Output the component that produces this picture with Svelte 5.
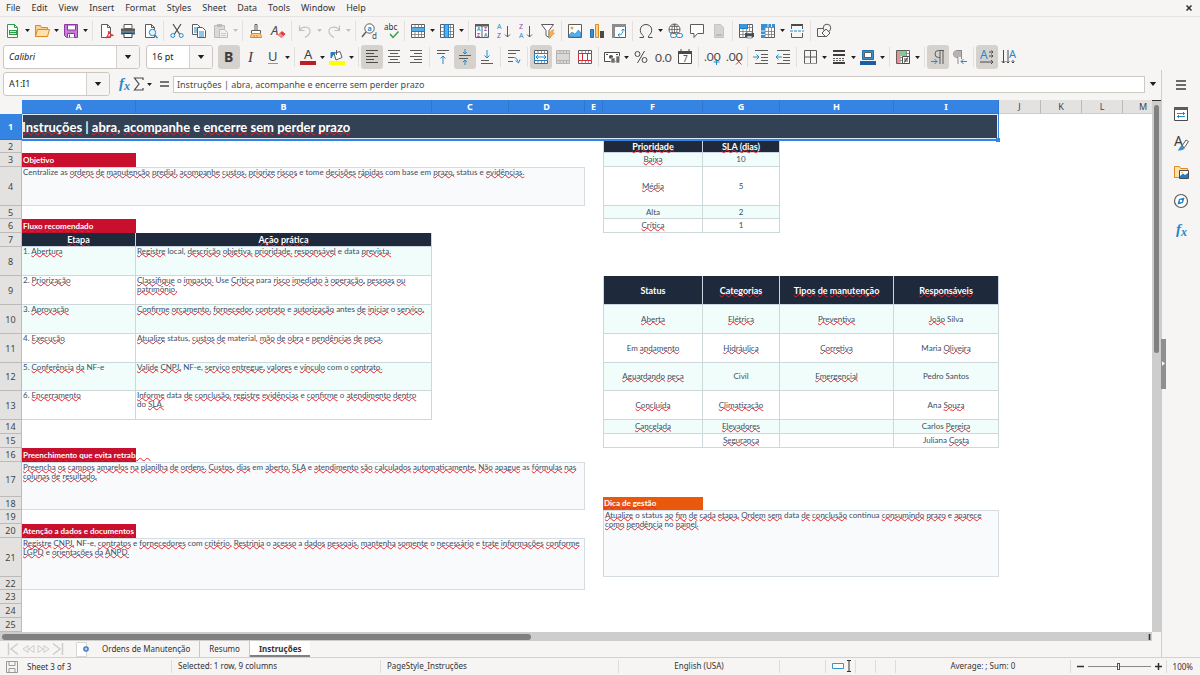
<script lang="ts">
  type Cell = { t: string; k: string; cols?: number; rows?: number };
  type Tool = { icon: string; label: string; split?: boolean; on?: boolean; off?: boolean };

  const menus = ['File', 'Edit', 'View', 'Insert', 'Format', 'Styles', 'Sheet', 'Data', 'Tools', 'Window', 'Help'];

  const page = '<path d="M3.5 1.5h6l3 3v10h-9z" fill="#fff" stroke="#5c5c5c"/><path d="M9.5 1.5v3h3" fill="none" stroke="#5c5c5c"/>';
  const table = '<path d="M1.5 1.5h13v13h-13z" fill="#fff" stroke="#5c5c5c"/><path d="M1.5 4.5h13M1.5 8.5h13M1.5 11.5h13M5 1.5v13M8.5 1.5v13M11.5 1.5v13" fill="none" stroke="#7a7a7a" stroke-width=".8"/>';

  const icons: Record<string, string> = {
    new: '<path d="M2.5 1.5h7l3 3v10h-10z" fill="#fff" stroke="#2e9e46"/><path d="M9.5 1.5v3h3" fill="none" stroke="#2e9e46"/><path d="M4 7h8v5H4z" fill="#2e9e46"/><path d="M5 8.5h6M5 10.5h6" stroke="#fff" stroke-width=".8"/>',
    open: '<path d="M1.5 13.5v-11h5l1 2h6v3" fill="#fbd08a" stroke="#e08a1e"/><path d="M1.5 13.5l2-7h12l-2 7z" fill="#fde1ae" stroke="#e08a1e"/>',
    save: '<path d="M1.5 1.5h13v13h-11l-2-2z" fill="#c77dd6" stroke="#8b3a9e"/><path d="M4.5 2v5h8V2z" fill="#fff" stroke="#8b3a9e"/><path d="M4.5 14.5v-4h7v4" fill="#fff" stroke="#8b3a9e"/><path d="M6.5 11.5v3" stroke="#8b3a9e"/>',
    pdf: page + '<path d="M8 15c2-2 3-5 2.5-7c2 4 3 4 5 4.5c-3 0-5 1-7.5 2.5" fill="none" stroke="#e5343d" stroke-width="1.2"/>',
    print: '<path d="M4 1.5h8v4H4z" fill="#fff" stroke="#5c5c5c"/><path d="M1 5.5h14v6H1z" fill="#5c5c5c"/><path d="M1 8h14v1.5H1z" fill="#3a8fd0"/><path d="M4 10.5h8v4H4z" fill="#fff" stroke="#3d3d3d"/>',
    preview: page + '<circle cx="10.5" cy="9.5" r="3.2" fill="#e5f3fd" stroke="#1e8bcd"/><path d="M12.8 12l2.7 3" stroke="#1e8bcd" stroke-width="1.4"/>',
    cut: '<path d="M4 1l6.5 10M12 1L5.5 11" stroke="#4a4a4a" stroke-width="1.2"/><circle cx="3.8" cy="12.5" r="2" fill="none" stroke="#1e8bcd"/><circle cx="12.2" cy="12.5" r="2" fill="none" stroke="#1e8bcd"/>',
    copy: '<path d="M1.5 1.5h5l3 3v7h-8z" fill="#fff" stroke="#5c5c5c"/><path d="M3 5h4M3 7h3M3 9h3" stroke="#1e8bcd"/><path d="M6.5 4.5h5l3 3v7h-8z" fill="#fff" stroke="#5c5c5c"/><path d="M8 9h5M8 11h5M8 13h5" stroke="#1e8bcd"/>',
    paste: '<path d="M1.5 2.5h10v12h-10z" fill="#dcdad8" stroke="#bdbbb9"/><path d="M4 1h5v3H4z" fill="#bdbbb9"/><path d="M6.5 6.5h5l3 3v5h-8z" fill="#f3f2f1" stroke="#bdbbb9"/><path d="M8 10.5h5M8 12.5h5" stroke="#c8c6c4"/>',
    clone: '<path d="M7 1.5h2v6H7z" fill="#fff" stroke="#5c5c5c"/><path d="M3.5 7.5h9v3h-9z" fill="#fff" stroke="#5c5c5c"/><path d="M3.5 10.5h9l1 4h-11z" fill="#fbc98a" stroke="#e08a1e"/><path d="M6 12v2M9 12v2" stroke="#e08a1e"/>',
    clear: '<text x="1" y="12" font-size="13" font-style="italic" fill="#4a4a4a">A</text><path d="M8 12l4-4 3.5 3-4 4z" fill="#e5343d"/><path d="M8 12l2-2 3.5 3-2 2z" fill="#f58a90"/>',
    undo: '<path d="M2.5 2.5v5h5M2.5 7.5c3-5 11-4 10.5 1c0 3-2.5 4.5-5 6" fill="none" stroke="#c2c0be" stroke-width="1.2"/>',
    redo: '<path d="M13.5 2.5v5h-5M13.5 7.5c-3-5-11-4-10.5 1c0 3 2.5 4.5 5 6" fill="none" stroke="#c2c0be" stroke-width="1.2"/>',
    find: '<circle cx="8.5" cy="5.5" r="4.7" fill="#fff" stroke="#5c5c5c"/><path d="M5 9l-4 5" stroke="#5c5c5c" stroke-width="1.4"/><text x="6.5" y="8" font-size="7" font-weight="bold" fill="#1e8bcd">a</text><text x="11" y="15.5" font-size="8" fill="#4a4a4a">d</text>',
    spell: '<text x="1" y="7" font-size="8" fill="#333">abc</text><path d="M7 11l3 3.5 5.5-6" fill="none" stroke="#2e9e46" stroke-width="1.4"/>',
    row: table + '<path d="M1.5 4.5h13v4h-13z" fill="#58aee6" stroke="#1e7fc8"/>',
    column: table + '<path d="M5.5 1.5h4v13h-4z" fill="#58aee6" stroke="#1e7fc8"/>',
    sort: '<path d="M1.5 1.5h13v13h-13z" fill="#fff" stroke="#5c5c5c"/><path d="M1 1h14v2.5H1z" fill="#5c5c5c"/><path d="M8 3v11" stroke="#5c5c5c"/><g font-size="5" font-weight="bold"><text x="3" y="8" fill="#1e8bcd">A</text><text x="3" y="14" fill="#9b3fb5">Z</text><text x="10" y="8" fill="#9b3fb5">Z</text><text x="10" y="14" fill="#1e8bcd">A</text></g>',
    asc: '<text x="1" y="6" font-size="7" fill="#1e8bcd">A</text><text x="1" y="15" font-size="7" fill="#9b3fb5">Z</text><path d="M11.5 3v11M9 11.5l2.5 2.5 2.5-2.5" fill="none" stroke="#5c5c5c"/>',
    desc: '<text x="1" y="6" font-size="7" fill="#9b3fb5">Z</text><text x="1" y="15" font-size="7" fill="#1e8bcd">A</text><path d="M11.5 3v11M9 11.5l2.5 2.5 2.5-2.5" fill="none" stroke="#5c5c5c"/>',
    filter: '<path d="M1.5 1.5h12l-4.5 6v7l-3-2v-5z" fill="#fff" stroke="#5c5c5c"/><path d="M12 7l-3.5 4.5h2.5l-1.5 4 5-5.5h-2.5l2-3z" fill="#fbb35a" stroke="#e08a1e" stroke-width=".6"/>',
    image: '<path d="M1.5 1.5h13v13h-13z" fill="#fff" stroke="#5c5c5c"/><circle cx="5" cy="5" r="1.5" fill="#f5a33b"/><path d="M2 12l3-3 3 2 3.5-4L14 10v4H2z" fill="#58aee6" stroke="#1e7fc8" stroke-width=".6"/>',
    chart: '<path d="M1.5 6.5h3v8h-3z" fill="#3a8fd0" stroke="#1e6fb0"/><path d="M6.5 1.5h3v13h-3z" fill="#fbd08a" stroke="#e08a1e"/><path d="M11 8h4v7h-4z" fill="#4a4a4a"/>',
    pivot: '<path d="M1.5 1.5h13v13h-13z" fill="#fff" stroke="#5c5c5c"/><path d="M1 1h14v3H4v11H1z" fill="#8d8d8d"/><path d="M7 12c4 0 5-2 5-6M10.5 7.5L12 6l1.5 1.5M8.5 10.5L7 12l1.5 1.5" fill="none" stroke="#1e8bcd"/>',
    omega: '<path d="M1.5 14.5h4v-1.5C0 9 2 1.5 8 1.5s8 7.5 2.5 11.5v1.5h4" fill="none" stroke="#4a4a4a"/>',
    link: '<circle cx="7.5" cy="6.5" r="5.5" fill="#fff" stroke="#5c5c5c"/><path d="M2 6.5h11M7.5 1v11M3.5 3.5h8M3.5 9.5h8M7.5 1c-3.5 3-3.5 8 0 11M7.5 1c3.5 3 3.5 8 0 11" fill="none" stroke="#5c5c5c" stroke-width=".8"/><rect x="3.5" y="10.5" width="6" height="4" rx="2" fill="#f6f5f4" stroke="#1e8bcd"/><rect x="9.5" y="10.5" width="6" height="4" rx="2" fill="#f6f5f4" stroke="#1e8bcd"/>',
    comment: '<path d="M1.5 1.5h13v9h-6l-3.5 4v-4h-3.5z" fill="#fff" stroke="#5c5c5c"/>',
    footer: '<path d="M3.5 1.5h6l3 3v10h-9z" fill="#d6d4d2" stroke="#c6c4c2"/><path d="M5 11h6v2H5z" fill="#bbb"/>',
    headers: table + '<path d="M1 1h9v5H1z" fill="#1e7fc8"/><path d="M2 2h7M2 4h7" stroke="#58aee6"/><path d="M7 10h9v4H7z" fill="#4a4a4a"/><path d="M9 8.5h5v2H9zM9 13h5v2H9z" fill="#fff" stroke="#4a6a8a" stroke-width=".7"/>',
    freeze: table + '<path d="M1 1h4v14H1z" fill="#3a8fd0"/><path d="M1 1h14v3H1z" fill="#3a8fd0"/><path d="M1 8h4M1 11.5h4M8 1v3M11.5 1v3" stroke="#fff" stroke-width=".8"/>',
    split: '<path d="M2 1h12v2H2z" fill="#4a4a4a"/><path d="M2.5 2v4M13.5 2v4M2.5 10v4.5h11V10" fill="none" stroke="#5c5c5c"/><path d="M1 8h14" stroke="#1e8bcd" stroke-dasharray="3 1"/>',
    draw: '<path d="M1.5 5.5h8v8h-8z" fill="#f6f5f4" stroke="#5c5c5c"/><circle cx="11" cy="5" r="3.8" fill="#f6f5f4" stroke="#5c5c5c"/><path d="M10 6l4 4-4 4-4-4z" fill="#f6f5f4" stroke="#5c5c5c"/>',
    bold: '<text x="3" y="13" font-size="14" font-weight="bold" fill="#3d3d3d">B</text>',
    italic: '<text x="5" y="13" font-size="15" font-style="italic" font-family="Liberation Serif, serif" fill="#3d3d3d">I</text>',
    underline: '<text x="3" y="12" font-size="13" fill="#4a4a4a">U</text><path d="M3 14.5h10" stroke="#58a6e0"/>',
    color: '<text x="4" y="10" font-size="13" fill="#3d3d3d">A</text><path d="M0 12h16v4H0z" fill="#c01c28"/>',
    fill: '<path d="M5 4.5l6-2 2 6-6 2.5z" fill="#fff" stroke="#5c5c5c"/><path d="M7.5 1v5" stroke="#5c5c5c"/><path d="M2 9V3.5h4L4 6z" fill="#1e7fc8" stroke="#1e7fc8"/><path d="M0 12h16v4H0z" fill="#ffff00"/>',
    left: '<path d="M2 1.5h12M2 4.5h8M2 7.5h12M2 10.5h8M2 13.5h12" stroke="#4a4a4a"/>',
    center: '<path d="M2 1.5h12M4 4.5h8M2 7.5h12M4 10.5h8M2 13.5h12" stroke="#5c5c5c"/>',
    right: '<path d="M2 1.5h12M6 4.5h8M2 7.5h12M6 10.5h8M2 13.5h12" stroke="#5c5c5c"/>',
    top: '<path d="M2 1.5h12M2 4.5h8" stroke="#5c5c5c"/><path d="M8 15V7M5.5 9.5L8 7l2.5 2.5" fill="none" stroke="#1e8bcd"/>',
    middle: '<path d="M2 6.5h12M2 9.5h9" stroke="#5c5c5c"/><path d="M8 0v5M6 3l2 2 2-2M8 16v-5M6 13l2-2 2 2" fill="none" stroke="#1e8bcd"/>',
    bottom: '<path d="M2 11.5h8M2 14.5h12" stroke="#5c5c5c"/><path d="M8 1v8M5.5 6.5L8 9l2.5-2.5" fill="none" stroke="#1e8bcd"/>',
    wrap: '<path d="M2 1.5h12M2 4.5h8M2 8.5h5M2 12.5h5" stroke="#5c5c5c"/><path d="M7 8.5c4 0 4 2 5 4M9.5 11.5l3 2.5 1.5-3.5" fill="none" stroke="#1e8bcd"/>',
    merge: table + '<path d="M1.5 4.5h13v7h-13z" fill="#fff" stroke="#1e7fc8"/><path d="M3 8h10M5 6L3 8l2 2M11 6l2 2-2 2" fill="none" stroke="#1e8bcd"/>',
    center2: '<path d="M1.5 1.5h13v13h-13zM1.5 4.5h13M1.5 11.5h13M5 1.5v3M8.5 1.5v3M11.5 1.5v3M5 11.5v3M8.5 11.5v3M11.5 11.5v3" fill="#dad8d6" stroke="#b5b3b1"/>',
    unmerge: table + '<path d="M1.5 4.5h13v7h-13zM5.5 4.5v7M10.5 4.5v7" fill="#fff" stroke="#d32f3a"/>',
    currency: '<path d="M.5 3.5h15v9H.5z" fill="#fff" stroke="#4a4a4a"/><circle cx="7" cy="8" r="2" fill="#4a4a4a"/><path d="M2 5.5h2M12 5.5h2" stroke="#4a4a4a"/><path d="M7 9h4v5H7zM12 7h3.5v7H12z" fill="#6a6a6a" stroke="#f6f5f4" stroke-width=".6"/>',
    percent: '<circle cx="4.5" cy="5" r="2.5" fill="none" stroke="#4a4a4a"/><circle cx="11.5" cy="11" r="2.5" fill="none" stroke="#4a4a4a"/><path d="M11.5 2l-7 12" stroke="#4a4a4a"/>',
    number: '<text x="0" y="13" font-size="12" font-family="Lato, sans-serif" fill="#4a4a4a">0.0</text>',
    date: '<path d="M1.5 2.5h13v12h-13z" fill="#fff" stroke="#4a4a4a"/><path d="M1 2h14v3H1z" fill="#4a4a4a"/><path d="M4 0v3M12 0v3" stroke="#4a4a4a"/><text x="6" y="13" font-size="8" fill="#333">7</text>',
    adddec: '<text x="0" y="12" font-size="12" font-family="Lato, sans-serif" fill="#4a4a4a">.00</text><path d="M12.5 10v6M9.5 13h6" stroke="#1e8bcd"/>',
    deldec: '<text x="0" y="12" font-size="12" font-family="Lato, sans-serif" fill="#4a4a4a">.00</text><path d="M10 10l5.5 5.5M15.5 10L10 15.5" stroke="#e5343d"/>',
    indent: '<path d="M2 1.5h13M8 5.5h7M8 8.5h7M2 14.5h13M8 11.5h7" stroke="#5c5c5c"/><path d="M0 8h6M3.5 5.5L6 8l-2.5 2.5" fill="none" stroke="#1e8bcd"/>',
    outdent: '<path d="M2 1.5h13M8 5.5h7M8 8.5h7M2 14.5h13M8 11.5h7" stroke="#5c5c5c"/><path d="M7 8H1M3.5 5.5L1 8l2.5 2.5" fill="none" stroke="#1e8bcd"/>',
    borders: '<path d="M2.5 14.5v-13h12v13M8.5 2v12M2.5 8h12" fill="none" stroke="#5c5c5c"/><path d="M2 14.5h13" stroke="#e08a1e"/>',
    style: '<path d="M2 2h12M2 6h12M2 14h12" stroke="#3d3d3d" stroke-width="2"/><path d="M2 9.5h12M2 11.5h12" stroke="#5c5c5c" stroke-dasharray="2 1"/>',
    bcolor: '<path d="M2.5 1.5h11v9h-11z" fill="#3a8fd0" stroke="#1e6fb0"/><path d="M4.5 3.5h7v5h-7z" fill="#fff" stroke="#5c5c5c"/><path d="M0 12h16v4H0z" fill="#1c5f9e"/>',
    cond: table + '<path d="M2 2h3v12H2z" fill="#f58a90"/><path d="M5 2h6v5H5z" fill="#7fce91"/><path d="M7.5 7.5h7v7h-7z" fill="#fff" stroke="#4a4a4a"/><path d="M9 10h4M9 12h4M12.5 8.5l-3 5" stroke="#4a4a4a"/>',
    ltr: '<path d="M14 1.5H8.5a3.5 3.5 0 0 0 0 7H10M10 2v13M13 2v13" fill="none" stroke="#5c5c5c"/><path d="M1 12.5h6M4.5 10L7 12.5 4.5 15" fill="none" stroke="#1e8bcd"/>',
    rtl: '<path d="M10 1.5H5a3.5 3.5 0 0 0 0 7h1V15M9.5 2v8" fill="none" stroke="#8d8b89"/><path d="M6 2H5a3 3 0 0 0 0 6h4V2z" fill="#b5b3b1"/><path d="M15 12.5H9M11.5 10L9 12.5l2.5 2.5" fill="none" stroke="#1e8bcd"/>',
    horiz: '<text x="1" y="10" font-size="12" fill="#1e8bcd">A</text><path d="M10 3h4M10 7h4M1 13h13M12.5 1.5L14 3l-1.5 1.5M12.5 5.5L14 7l-1.5 1.5M12 11l2 2-2 2" fill="none" stroke="#4a4a4a"/>',
    vert: '<text x="8" y="9" font-size="11" fill="#1e8bcd">A</text><path d="M2.5 1v13M7 1v13M12 11v3M.5 12l2 2 2-2M5.5 12.5L7 14l1.5-1.5M10.5 12.5L12 14l1.5-1.5" fill="none" stroke="#4a4a4a"/>',
    fx: '<g font-family="Liberation Serif, serif" font-style="italic" font-weight="bold" fill="#2b86cc"><text x="3" y="12" font-size="15">f</text><text x="8" y="14" font-size="12">x</text></g>',
    sigma: '<path d="M12 4V2H3.5l4.5 6-4.5 6H12v-2" fill="none" stroke="#4a4a4a" stroke-width="1.2"/>',
    equals: '<path d="M4 6h9M4 10h9" stroke="#4a4a4a" stroke-width="1.6"/>',
    menu: '<path d="M3 4h10M3 8h10M3 12h10" stroke="#3d3d3d" stroke-width="1.5"/>',
    props: '<path d="M1.5 1.5h13v13h-13z" fill="#fff" stroke="#4a4a4a"/><path d="M1 1h14v3H1z" fill="#5c5c5c"/><path d="M4 7.5h8M4 10.5h8M10 6l1.5 1.5L10 9M6 9l-1.5 1.5L6 12" fill="none" stroke="#1e8bcd"/>',
    brush: '<text x="1" y="11" font-size="14" fill="#3d3d3d">A</text><path d="M9 11l4-6 2.5 1.5-4 6z" fill="#fff" stroke="#5c5c5c"/><path d="M9 10.5l3 2.5c-1 2-4 2.5-7.5 2.5 1.5-1 2-4 4.5-5z" fill="#3a8fd0"/>',
    gallery: '<path d="M1.5 13.5v-11h5l1 2h7v9z" fill="#fde1ae" stroke="#e08a1e"/><path d="M6.5 6.5h9v8h-9z" fill="#fff" stroke="#4a4a4a"/><path d="M7 12l3-2.5 2 1.5 3-2v5H7z" fill="#1e7fc8"/><circle cx="9" cy="8.5" r=".8" fill="#f5a33b"/>',
    compass: '<circle cx="8" cy="8" r="6.5" fill="#fff" stroke="#5c5c5c" stroke-width="1.2"/><path d="M11.5 4.5L10 10l-5.5 1.5L6 6z" fill="#1e7fc8"/><circle cx="8" cy="8" r="1.3" fill="#fff"/>',
    disk: '<path d="M2.5 2.5h11v11h-11zM5 2.5v4h6v-4M5 13.5v-4h6v4" fill="none" stroke="#9a9896"/>',
    addsheet: '<path d="M1.5 1.5h10v14h-10z" fill="#fff" stroke="#d8d6d4"/><circle cx="11" cy="8" r="2.8" fill="#3a76c4"/><path d="M11 6.5v3M9.5 8h3" stroke="#fff" stroke-width=".8"/>',
    first: '<path d="M3.5 2v12M13 2.5L6 8l7 5.5" fill="none" stroke="#cfcdcb" stroke-width="1.5"/>',
    prev: '<path d="M8 4.5L3 8l5 3.5zM14 4.5L9 8l5 3.5z" fill="none" stroke="#cfcdcb"/>',
    next: '<path d="M3 4.5L8 8l-5 3.5zM9 4.5L14 8l-5 3.5z" fill="none" stroke="#cfcdcb"/>',
    last: '<path d="M12.5 2v12M3 2.5L10 8l-7 5.5" fill="none" stroke="#cfcdcb" stroke-width="1.5"/>',
  };

  const standard: (Tool | null)[] = [
    { icon: 'new', label: 'New', split: true },
    { icon: 'open', label: 'Open', split: true },
    { icon: 'save', label: 'Save', split: true },
    null,
    { icon: 'pdf', label: 'Export as PDF' },
    { icon: 'print', label: 'Print' },
    { icon: 'preview', label: 'Print Preview' },
    null,
    { icon: 'cut', label: 'Cut' },
    { icon: 'copy', label: 'Copy' },
    { icon: 'paste', label: 'Paste', split: true, off: true },
    null,
    { icon: 'clone', label: 'Clone Formatting' },
    { icon: 'clear', label: 'Clear Formatting' },
    null,
    { icon: 'undo', label: 'Undo', split: true, off: true },
    { icon: 'redo', label: 'Redo', split: true, off: true },
    null,
    { icon: 'find', label: 'Find and Replace' },
    { icon: 'spell', label: 'Spelling' },
    null,
    { icon: 'row', label: 'Row', split: true },
    { icon: 'column', label: 'Column', split: true },
    null,
    { icon: 'sort', label: 'Sort' },
    { icon: 'asc', label: 'Sort Ascending' },
    { icon: 'desc', label: 'Sort Descending' },
    { icon: 'filter', label: 'AutoFilter' },
    null,
    { icon: 'image', label: 'Insert Image' },
    { icon: 'chart', label: 'Insert Chart' },
    { icon: 'pivot', label: 'Pivot Table' },
    null,
    { icon: 'omega', label: 'Special Character', split: true },
    { icon: 'link', label: 'Hyperlink' },
    { icon: 'comment', label: 'Comment' },
    { icon: 'footer', label: 'Headers and Footers', off: true },
    null,
    { icon: 'headers', label: 'Define Print Area' },
    { icon: 'freeze', label: 'Freeze Rows and Columns', split: true },
    { icon: 'split', label: 'Split Window' },
    null,
    { icon: 'draw', label: 'Show Draw Functions' },
  ];

  const formatting: (Tool | null)[] = [
    { icon: 'bold', label: 'Bold', on: true },
    { icon: 'italic', label: 'Italic' },
    { icon: 'underline', label: 'Underline', split: true },
    null,
    { icon: 'color', label: 'Font Color', split: true },
    { icon: 'fill', label: 'Background Color', split: true },
    null,
    { icon: 'left', label: 'Align Left', on: true },
    { icon: 'center', label: 'Center Horizontally' },
    { icon: 'right', label: 'Align Right' },
    null,
    { icon: 'top', label: 'Align Top' },
    { icon: 'middle', label: 'Center Vertically', on: true },
    { icon: 'bottom', label: 'Align Bottom' },
    null,
    { icon: 'wrap', label: 'Wrap Text' },
    null,
    { icon: 'merge', label: 'Merge and Center', on: true },
    { icon: 'center2', label: 'Merge Cells', off: true },
    { icon: 'unmerge', label: 'Unmerge Cells' },
    null,
    { icon: 'currency', label: 'Currency', split: true },
    { icon: 'percent', label: 'Percent' },
    { icon: 'number', label: 'Number' },
    { icon: 'date', label: 'Date' },
    null,
    { icon: 'adddec', label: 'Add Decimal Place' },
    { icon: 'deldec', label: 'Delete Decimal Place' },
    null,
    { icon: 'indent', label: 'Increase Indent' },
    { icon: 'outdent', label: 'Decrease Indent' },
    null,
    { icon: 'borders', label: 'Borders', split: true },
    { icon: 'style', label: 'Border Style', split: true },
    { icon: 'bcolor', label: 'Border Color', split: true },
    null,
    { icon: 'cond', label: 'Conditional', split: true },
    null,
    { icon: 'ltr', label: 'Left-To-Right', on: true },
    { icon: 'rtl', label: 'Right-To-Left' },
    null,
    { icon: 'horiz', label: 'Text direction left to right', on: true },
    { icon: 'vert', label: 'Text direction top to bottom' },
  ];

  const panels = [
    ['menu', 'Sidebar Settings'],
    ['props', 'Properties'],
    ['brush', 'Styles'],
    ['gallery', 'Gallery'],
    ['compass', 'Navigator'],
    ['fx', 'Functions'],
  ];

  const letters = 'ABCDEFGHIJKLM'.split('');
  const widths = [114, 296, 77, 76, 18, 100, 77, 114, 105, 42, 41, 41];
  const heights = [26, 13, 14, 39, 13, 14, 14, 29, 29, 29, 29, 28, 29, 14, 14, 14, 35, 13, 14, 14, 39, 13, 14, 14, 14];
  const selectedCols = 9;

  const title = 'Instruções | abra, acompanhe e encerre sem perder prazo';

  const cells: Record<string, Cell> = {
    A1: { t: title, k: 'title', cols: 9 },
    F2: { t: 'Prioridade', k: 'head edge' },
    G2: { t: 'SLA (dias)', k: 'head' },
    A3: { t: 'Objetivo', k: 'tag' },
    A4: {
      t: 'Centralize as ordens de manutenção predial, acompanhe custos, priorize riscos e tome decisões rápidas com base em prazo, status e evidências.',
      k: 'note',
      cols: 4,
    },
    A6: { t: 'Fluxo recomendado', k: 'tag' },
    A7: { t: 'Etapa', k: 'head' },
    B7: { t: 'Ação prática', k: 'head' },
    A16: { t: 'Preenchimento que evita retrabalho', k: 'tag' },
    A17: {
      t: 'Preencha os campos amarelos na planilha de ordens. Custos, dias em aberto, SLA e atendimento são calculados automaticamente. Não apague as fórmulas nas colunas de resultado.',
      k: 'note',
      cols: 4,
      rows: 2,
    },
    F18: { t: 'Dica de gestão', k: 'tag orange' },
    F19: {
      t: 'Atualize o status ao fim de cada etapa. Ordem sem data de conclusão continua consumindo prazo e aparece como pendência no painel.',
      k: 'note edge',
      cols: 4,
      rows: 3,
    },
    A20: { t: 'Atenção a dados e documentos', k: 'tag' },
    A21: {
      t: 'Registre CNPJ, NF-e, contratos e fornecedores com critério. Restrinja o acesso a dados pessoais, mantenha somente o necessário e trate informações conforme LGPD e orientações da ANPD.',
      k: 'note',
      cols: 4,
      rows: 2,
    },
  };

  // Fills a bordered block from its top left cell, banding every other row.
  function block(cols: string, top: number, kind: string, lines: string[][]) {
    lines.forEach((line, i) => {
      line.forEach((t, j) => {
        const edge = cols[j] === 'F' ? 'edge' : '';
        cells[cols[j] + (top + i)] = { t, k: `${kind} ${i % 2 ? '' : 'band'} ${edge}` };
      });
    });
  }

  block('FG', 3, 'mid', [
    ['Baixa', '10'],
    ['Média', '5'],
    ['Alta', '2'],
    ['Crítica', '1'],
  ]);
  block('AB', 8, 'step', [
    ['1. Abertura', 'Registre local, descrição objetiva, prioridade, responsável e data prevista.'],
    ['2. Priorização', 'Classifique o impacto. Use Crítica para risco imediato à operação, pessoas ou patrimônio.'],
    ['3. Aprovação', 'Confirme orçamento, fornecedor, contrato e autorização antes de iniciar o serviço.'],
    ['4. Execução', 'Atualize status, custos de material, mão de obra e pendências de peça.'],
    ['5. Conferência da NF-e', 'Valide CNPJ, NF-e, serviço entregue, valores e vínculo com o contrato.'],
    ['6. Encerramento', 'Informe data de conclusão, registre evidências e confirme o atendimento dentro do SLA.'],
  ]);
  block('FGHI', 10, 'mid', [
    ['Aberta', 'Elétrica', 'Preventiva', 'João Silva'],
    ['Em andamento', 'Hidráulica', 'Corretiva', 'Maria Oliveira'],
    ['Aguardando peça', 'Civil', 'Emergencial', 'Pedro Santos'],
    ['Concluída', 'Climatização', '', 'Ana Souza'],
    ['Cancelada', 'Elevadores', '', 'Carlos Pereira'],
    ['', 'Segurança', '', 'Juliana Costa'],
  ]);
  ['Status', 'Categorias', 'Tipos de manutenção', 'Responsáveis'].forEach((t, i) => {
    cells['FGHI'[i] + 9] = { t, k: i ? 'head' : 'head edge' };
  });

  const covered = new Set<string>();
  for (const [ref, c] of Object.entries(cells)) {
    const col = letters.indexOf(ref[0]);
    const row = Number(ref.slice(1));
    for (let r = 0; r < (c.rows ?? 1); r++) {
      for (let k = 0; k < (c.cols ?? 1); k++) {
        if (r || k) covered.add(letters[col + k] + (row + r));
      }
    }
  }

  // Words the English dictionary accepts.
  const known = new Set(
    'centralize as e tome com base em status local data o use para antes material nf-e do a continua no civil silva maria pedro santos ana carlos juliana alta |'.split(' '),
  );

  function misspelt(word: string) {
    const w = word.toLowerCase().replace(/[.,()]/g, '');
    return w !== '' && !/^\d+$/.test(w) && !known.has(w);
  }
</script>

{#snippet icon(name: string)}
  <svg class="icon" viewBox="0 0 16 16" aria-hidden="true">{@html icons[name]}</svg>
{/snippet}

{#snippet arrow()}
  <svg class="arrow" viewBox="0 0 8 5" aria-hidden="true"><path d="M0 0h8L4 5z" fill="currentColor" /></svg>
{/snippet}

{#snippet tools(list: (Tool | null)[])}
  {#each list as tool}
    {#if tool}
      <button class="tool" class:split={tool.split} class:on={tool.on} class:off={tool.off} aria-label={tool.label}>
        {@render icon(tool.icon)}
        {#if tool.split}{@render arrow()}{/if}
      </button>
    {:else}
      <span class="sep"></span>
    {/if}
  {/each}
{/snippet}

<div class="window">
  <nav class="menubar">
    {#each menus as item}
      <button>{item}</button>
    {/each}
    <button class="close" aria-label="Close document">
      <svg viewBox="0 0 6 6" aria-hidden="true"><path d="M.5 .5l5 5M5.5 .5l-5 5" stroke="#2e2e2e" stroke-width="1.5" /></svg>
    </button>
  </nav>

  <div class="toolbar">{@render tools(standard)}</div>

  <div class="toolbar second">
    <label class="combo font">
      <select aria-label="Font name"><option>Calibri</option></select>
      <span class="drop">{@render arrow()}</span>
    </label>
    <label class="combo size">
      <select aria-label="Font size"><option>16 pt</option></select>
      <span class="drop">{@render arrow()}</span>
    </label>
    {@render tools(formatting)}
  </div>

  <div class="body">
    <main>
      <div class="formula">
        <label class="combo ref">
          <select aria-label="Name box"><option>A1:I1</option></select>
          <span class="drop">{@render arrow()}</span>
        </label>
        <button class="tool slim" aria-label="Function Wizard">{@render icon('fx')}</button>
        <button class="tool sum" aria-label="Select Function">{@render icon('sigma')}{@render arrow()}</button>
        <button class="tool slim" aria-label="Formula">{@render icon('equals')}</button>
        <input class="line" aria-label="Input line" value={title} />
        <button class="expand" aria-label="Expand Formula Bar">{@render arrow()}</button>
      </div>

      <div class="grid">
        <div class="sheet">
          <table>
            <colgroup>
              <col class="rowcol" />
              {#each widths as w}
                <col style="width: {w}px" />
              {/each}
              <col />
            </colgroup>
            <thead>
              <tr>
                <th class="corner"></th>
                {#each letters as letter, i}
                  <th class:picked={i < selectedCols}>{letter}</th>
                {/each}
              </tr>
            </thead>
            <tbody>
              {#each heights as h, r}
                <tr style="height: {h}px">
                  <th class:picked={r === 0}>{r + 1}</th>
                  {#each letters as letter}
                    {@const ref = letter + (r + 1)}
                    {@const cell = cells[ref]}
                    {#if cell}
                      <td class={cell.k} colspan={cell.cols ?? 1} rowspan={cell.rows ?? 1}>
                        {#each cell.t.split(' ') as word, i}{i ? ' ' : ''}<span class:bad={misspelt(word)}>{word}</span>{/each}
                        {#if r === 0}<i class="frame"></i>{/if}
                      </td>
                    {:else if !covered.has(ref)}
                      <td></td>
                    {/if}
                  {/each}
                </tr>
              {/each}
            </tbody>
          </table>
        </div>
        <div class="vscroll"><span class="thumb"></span></div>
        <div class="hscroll"><span class="thumb"></span><span class="mark"></span></div>
      </div>

      <div class="tabs">
        <button class="step-btn" aria-label="First sheet">{@render icon('first')}</button>
        <button class="step-btn" aria-label="Previous sheet">{@render icon('prev')}</button>
        <button class="step-btn" aria-label="Next sheet">{@render icon('next')}</button>
        <button class="step-btn" aria-label="Last sheet">{@render icon('last')}</button>
        <button class="add" aria-label="Add sheet">{@render icon('addsheet')}</button>
        <button class="tab">Ordens de Manutenção</button>
        <button class="tab">Resumo</button>
        <button class="tab active">Instruções</button>
      </div>
    </main>

    <aside>
      {#each panels as [name, label]}
        <button aria-label={label}>{@render icon(name)}</button>
      {/each}
      <button class="grip" aria-label="Hide sidebar">
        <svg viewBox="0 0 4 6" aria-hidden="true"><path d="M0 0l4 3-4 3z" fill="#fff" /></svg>
      </button>
    </aside>
  </div>

  <footer>
    <span class="field saved">{@render icon('disk')}Sheet 3 of 3</span>
    <span class="field picked-info">Selected: 1 row, 9 columns</span>
    <span class="field style-info">PageStyle_Instruções</span>
    <span class="field lang">English (USA)</span>
    <span class="field blank"></span>
    <span class="field mode">
      <svg viewBox="0 0 20 12" aria-hidden="true">
        <path d="M.5 3.5h11v5H.5z" fill="#fff" stroke="#3a94c8" />
        <path d="M15 .5h4M15 11.5h4M17 .5v11" stroke="#333" />
      </svg>
    </span>
    <span class="field tiny"></span>
    <span class="field tiny"></span>
    <span class="field sum-info">Average: ; Sum: 0</span>
    <span class="field zoom">
      <button aria-label="Zoom out">
        <svg viewBox="0 0 7 7" aria-hidden="true"><path d="M0 3.5h7" stroke="#2e2e2e" stroke-width="1.5" /></svg>
      </button>
      <input type="range" min="0" max="100" value="49" aria-label="Zoom" />
      <button aria-label="Zoom in">
        <svg viewBox="0 0 7 7" aria-hidden="true"><path d="M0 3.5h7M3.5 0v7" stroke="#2e2e2e" stroke-width="1.5" /></svg>
      </button>
    </span>
    <span class="percent">100%</span>
  </footer>
</div>

<style>
  :global(body) {
    margin: 0;
    background: #f6f5f4;
  }

  .window {
    display: flex;
    flex-direction: column;
    height: 100vh;
    background: #f6f5f4;
    color: #333;
    font-family: 'Noto Sans', sans-serif;
    font-size: 9px;
    line-height: 12px;
  }

  button,
  input,
  select {
    margin: 0;
    padding: 0;
    border: 0;
    background: none;
    color: inherit;
    font: inherit;
  }

  .icon {
    display: block;
    flex: none;
    width: 16px;
    height: 16px;
    overflow: visible;
  }

  .arrow {
    display: block;
    flex: none;
    width: 5px;
    height: 3px;
    color: #1f1f1f;
  }

  .menubar {
    display: flex;
    gap: 11px;
    height: 16px;
    padding: 0 8px 0 6px;
    border-bottom: 1px solid #e6e4e2;
  }

  .close {
    margin-left: auto;
  }

  .close svg {
    display: block;
    width: 6px;
    height: 6px;
  }

  .toolbar {
    display: flex;
    align-items: center;
    height: 27px;
    padding-left: 2px;
  }

  .toolbar.second {
    height: 26px;
    padding-left: 3px;
  }

  .tool {
    display: flex;
    flex: none;
    align-items: center;
    width: 22px;
    height: 24px;
    padding-left: 3px;
    border-radius: 3px;
  }

  .split {
    gap: 4px;
    width: 29px;
  }

  .on {
    background: #d5d1cd;
  }

  .off .arrow {
    color: #c2c0be;
  }

  .sep {
    flex: none;
    width: 2px;
    height: 20px;
    margin-right: 2px;
    border-right: 1px solid #e2e0de;
  }

  .split + .sep {
    margin-left: 1px;
  }

  .combo {
    display: grid;
    grid-template-columns: 1fr 23px;
    box-sizing: border-box;
    height: 24px;
    border: 1px solid #cdc7c2;
    border-radius: 3px;
    background: #fff;
    overflow: hidden;
  }

  .combo select {
    grid-area: 1 / 1 / 2 / 3;
    width: 100%;
    padding-left: 5px;
    appearance: none;
    color: #222;
  }

  .drop {
    display: grid;
    grid-area: 1 / 2;
    place-items: center;
    border-left: 1px solid #d5d0cc;
    background: #f6f5f4;
    pointer-events: none;
  }

  .drop .arrow,
  .expand .arrow {
    width: 8px;
    height: 4px;
  }

  .font {
    width: 137px;
    margin-right: 6px;
  }

  .font select {
    font-style: italic;
  }

  .size {
    width: 67px;
    margin-right: 5px;
  }

  .body {
    display: flex;
    flex: 1;
    min-height: 0;
  }

  main {
    display: flex;
    flex: 1;
    flex-direction: column;
    min-width: 0;
    border-right: 1px solid #cfccc9;
  }

  .formula {
    display: flex;
    align-items: center;
    box-sizing: border-box;
    height: 30px;
    padding: 0 0 2px 3px;
  }

  .ref {
    width: 107px;
    margin-right: 3px;
  }

  .slim {
    width: 18px;
  }

  .sum {
    gap: 0;
    width: 24px;
    padding-left: 0;
  }

  .sum + .slim {
    margin-left: -2px;
  }

  .line {
    flex: 1;
    box-sizing: border-box;
    min-width: 0;
    height: 17px;
    margin-left: 2px;
    padding-left: 3px;
    border: 1px solid #cdc9c5;
    background: #fff;
    color: #4a4a4a;
  }

  .expand {
    display: grid;
    place-items: center;
    width: 16px;
    height: 17px;
  }

  .grid {
    display: grid;
    flex: 1;
    grid-template-columns: minmax(0, 1fr) 9px;
    grid-template-rows: minmax(0, 1fr) 9px;
    min-height: 0;
  }

  .sheet {
    overflow: hidden;
    background: #fff;
  }

  table {
    width: 100%;
    min-width: 1164px;
    table-layout: fixed;
    border-spacing: 0;
    color: #3f4d61;
    font-family: Lato, Carlito, sans-serif;
    font-size: 8px;
    line-height: 9px;
  }

  .rowcol {
    width: 22px;
  }

  thead tr {
    height: 14px;
  }

  th,
  td {
    padding: 0;
  }

  th {
    border-right: 1px solid #bdbbb9;
    border-bottom: 1px solid #bdbbb9;
    background: #e3e2e1;
    color: #444;
    font-family: 'Noto Sans', sans-serif;
    font-size: 9px;
    font-weight: 400;
  }

  thead th {
    border-bottom-color: #cfcdcb;
    line-height: 12px;
  }

  th.corner {
    background: #f6f5f4;
    border-color: #f6f5f4;
  }

  th.picked {
    border-color: #2f76cf;
    background: #3584e4;
    color: #fff;
    font-weight: 700;
  }

  td {
    vertical-align: top;
    white-space: nowrap;
  }

  .bad {
    text-decoration: underline wavy #e0262f 1px;
    text-decoration-skip-ink: none;
    text-underline-offset: -1px;
  }

  .title {
    position: relative;
    background: #334155;
    color: #fff;
    font-size: 13px;
    font-weight: 700;
    line-height: 16px;
    vertical-align: middle;
  }

  /* selection outline with its fill handle */
  .frame {
    position: absolute;
    inset: 0 0 -1px;
    border: solid #3584e4;
    border-width: 0 1px 2px 0;
    box-shadow: inset 0 0 0 1px #dbe8f8;
  }

  .frame::after {
    content: '';
    position: absolute;
    right: -2px;
    bottom: -3px;
    width: 4px;
    height: 4px;
    background: #3584e4;
  }

  .head {
    border-right: 1px solid #cbd5e1;
    border-bottom: 1px solid #cbd5e1;
    background: #1e293b;
    color: #fff;
    font-size: 9px;
    font-weight: 700;
    text-align: center;
    vertical-align: middle;
  }

  .tag {
    padding-left: 1px;
    background: #c8102e;
    color: #fff;
    font-weight: 700;
    vertical-align: middle;
  }

  .orange {
    background: #ea580c;
  }

  .note {
    padding-left: 1px;
    border: 1px solid #d5dce2;
    border-left-width: 0;
    background: #f8fafc;
    white-space: normal;
  }

  .step,
  .mid {
    border-right: 1px solid #cdd8da;
    border-bottom: 1px solid #cdd8da;
  }

  .step {
    padding: 0 5px 0 1px;
    white-space: normal;
  }

  .mid {
    text-align: center;
    vertical-align: middle;
  }

  .edge {
    border-left: 1px solid #cdd8da;
  }

  .band {
    background: #f0fdfa;
  }

  .vscroll,
  .hscroll {
    display: flex;
    background: #cdcdcd;
  }

  .vscroll {
    justify-content: center;
    padding-top: 4px;
    border-top: 1px solid #333;
  }

  .thumb {
    border-radius: 3px;
    background: #808080;
  }

  .vscroll .thumb {
    width: 5px;
    height: 47%;
  }

  .hscroll {
    align-items: center;
    justify-content: space-between;
    padding: 0 1px 0 2px;
  }

  .hscroll .thumb {
    width: 46%;
    height: 6px;
  }

  .mark {
    width: 1px;
    height: 6px;
    border: solid #9c9c9c;
    border-width: 0 1px;
    background: #333;
  }

  .tabs {
    display: flex;
    align-items: center;
    height: 16px;
    padding-left: 5px;
    border-bottom: 1px solid #d3d0cd;
    font-size: 8px;
  }

  .step-btn {
    width: 15px;
  }

  .add {
    width: 16px;
    margin: 0 2px 0 10px;
  }

  .tab {
    height: 16px;
    padding: 0 9px;
    border-right: 1px solid #c9c6c3;
    color: #333;
  }

  .tab.active {
    border-right: 0;
    background: #fff;
    box-shadow: inset 0 -2px #808080;
    font-weight: 700;
  }

  aside {
    position: relative;
    display: flex;
    flex-direction: column;
    gap: 13px;
    align-items: center;
    width: 38px;
    padding-top: 7px;
    box-sizing: border-box;
    border-bottom: 1px solid #d3d0cd;
  }

  .grip {
    position: absolute;
    top: 50%;
    left: -1px;
    display: grid;
    place-items: center;
    width: 5px;
    height: 50px;
    margin-top: -25px;
    background: #8f8f8f;
  }

  .grip svg {
    width: 3px;
    height: 5px;
  }

  footer {
    display: flex;
    align-items: center;
    height: 17px;
    font-size: 8px;
  }

  .field {
    box-sizing: border-box;
    height: 13px;
    padding-left: 6px;
    border-right: 1px solid #dedbd8;
  }

  .saved {
    display: flex;
    gap: 7px;
    align-items: center;
    width: 172px;
    padding-left: 4px;
  }

  .picked-info {
    width: 209px;
  }

  .style-info {
    width: 238px;
  }

  .lang {
    width: 161px;
    padding: 0;
    text-align: center;
  }

  .blank {
    width: 46px;
  }

  .mode {
    width: 30px;
  }

  .mode svg {
    display: block;
    width: 20px;
    height: 12px;
  }

  .tiny {
    width: 20px;
  }

  .sum-info {
    flex: 1;
    padding: 0;
    text-align: center;
  }

  .zoom {
    display: flex;
    gap: 4px;
    align-items: center;
    width: 96px;
    padding: 0 4px 0 6px;
  }

  .zoom svg {
    display: block;
    width: 7px;
    height: 7px;
  }

  .zoom input {
    flex: 1;
    min-width: 0;
    height: 12px;
    appearance: none;
    background: linear-gradient(#8a8a8a, #8a8a8a) center / 100% 1px no-repeat;
  }

  .zoom input::-webkit-slider-thumb {
    box-sizing: border-box;
    width: 3px;
    height: 7px;
    appearance: none;
    border: 1px solid #555;
    background: #f6f5f4;
  }

  .percent {
    padding: 0 7px 0 6px;
  }
</style>
